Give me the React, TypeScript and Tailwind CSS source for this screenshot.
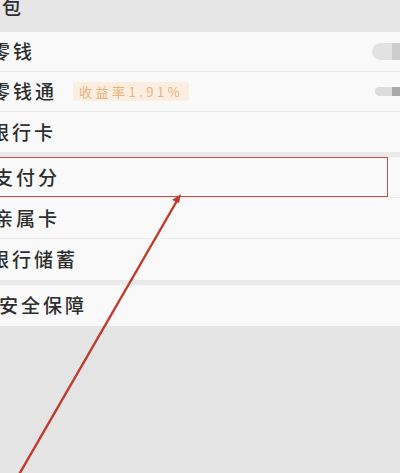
import React from "react";

const font = { fontFamily: '"Noto Sans CJK SC", "Noto Sans", sans-serif' };

type Row = { label: string; shift: string; extra?: React.ReactNode };

const Toggle: React.FC<{ big?: boolean }> = ({ big }) =>
  big ? (
    <div className="flex h-[17px] w-[30px] overflow-hidden rounded-l-full bg-[#e2e2e2] mr-[-2px]">
      <div className="ml-auto h-full w-[10px] bg-[#cdcdcd]" />
    </div>
  ) : (
    <div className="flex h-[9px] w-[27px] overflow-hidden rounded-l-full bg-[#dcdcdc] mr-[-2px]">
      <div className="ml-auto h-full w-[10px] bg-[#a9a9a9]" />
    </div>
  );

const Item: React.FC<{ row: Row; last?: boolean; tall?: boolean; right?: React.ReactNode }> = ({
  row,
  last,
  tall,
  right,
}) => (
  <div
    className={`flex items-center bg-[#f9f9f9] ${tall ? "h-[41px]" : "h-[40px]"} ${
      last ? "" : "border-b border-[#ebebeb]"
    }`}
  >
    <span className={`text-[19px] font-medium tracking-[3px] text-[#2e2e2e] ${row.shift}`}>{row.label}</span>
    {row.extra}
    <div className="ml-auto">{right}</div>
  </div>
);

export default function App() {
  return (
    <div className="relative h-[473px] w-[400px] overflow-hidden bg-[#e4e4e4]" style={font}>
      <div className="flex h-[32px] items-start bg-[#e6e6e6]">
        <span className="ml-[-20px] mt-[-7px] text-[19px] font-medium tracking-[3px] text-[#2e2e2e]">钱包</span>
      </div>

      <Item row={{ label: "零钱", shift: "ml-[-9px]" }} right={<Toggle big />} />
      <Item
        row={{
          label: "零钱通",
          shift: "ml-[-9px]",
          extra: (
            <span className="ml-[16px] flex h-[19px] items-center rounded-[3px] bg-[#fbede0] px-[6px] text-[13px] tracking-[3.5px] text-[#ebb27a]">
              收益率1.91%
            </span>
          ),
        }}
        right={<Toggle />}
      />
      <Item row={{ label: "银行卡", shift: "ml-[-10px]" }} last />

      <div className="h-[5px] bg-[#e9e9e9]" />

      <Item row={{ label: "支付分", shift: "ml-[-6px]" }} tall />
      <Item row={{ label: "亲属卡", shift: "ml-[-6px]" }} tall />
      <Item row={{ label: "银行储蓄", shift: "ml-[-10px]" }} tall last />

      <div className="h-[5px] bg-[#e9e9e9]" />

      <Item row={{ label: "安全保障", shift: "ml-[-1px]" }} tall last />

      {/* annotation box */}
      <div className="absolute left-[-2px] top-[157px] h-[40px] w-[390px] border-[1.5px] border-[#c0504d]" />

      {/* annotation arrow */}
      <svg className="absolute left-0 top-0" width="400" height="473" viewBox="0 0 400 473">
        <line x1="178" y1="199" x2="17" y2="478" stroke="#c23a2c" strokeWidth="2.4" strokeLinecap="round" />
        <polygon points="181,194 172,200 179,203" fill="#c23a2c" />
      </svg>
    </div>
  );
}
